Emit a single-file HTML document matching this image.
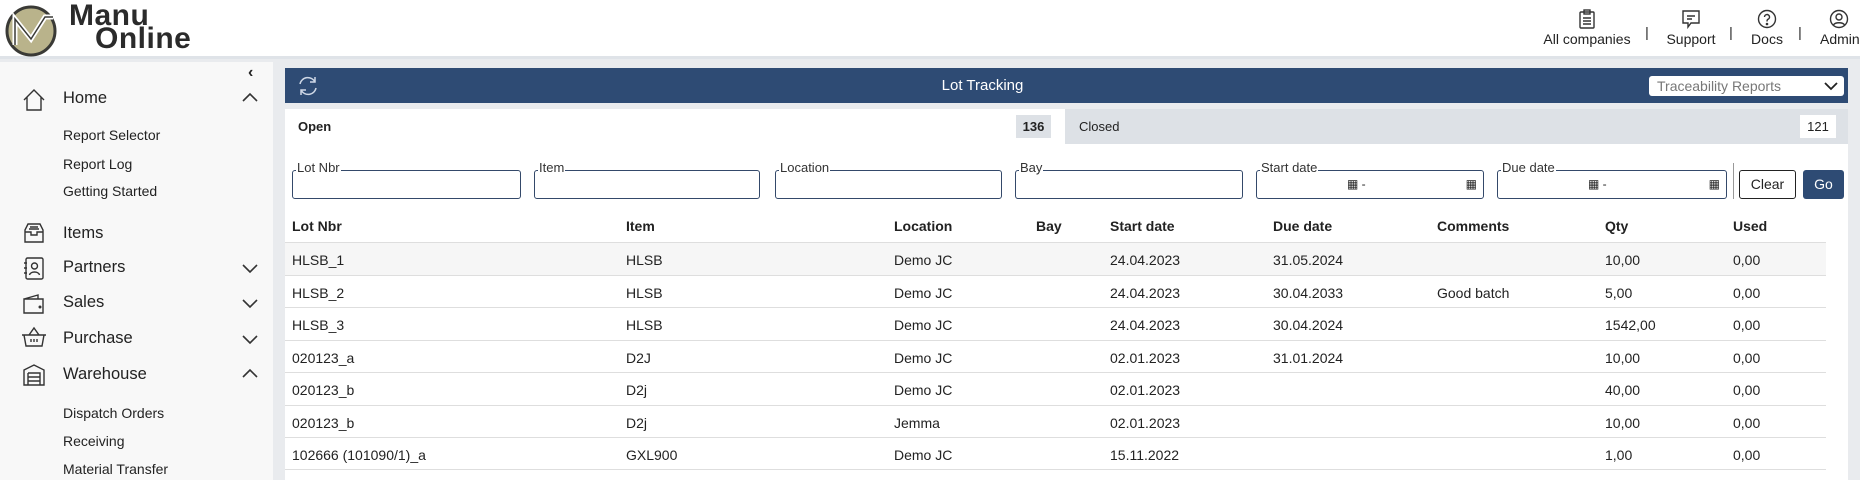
<!DOCTYPE html>
<html><head><meta charset="utf-8"><style>
*{box-sizing:border-box;margin:0;padding:0}
body{width:1860px;height:480px;overflow:hidden;background:#e9ebee;font-family:"Liberation Sans",Arial,sans-serif;color:#222;position:relative}
.abs{position:absolute}
#hdr{left:0;top:0;width:1860px;height:59px;background:#fff;border-bottom:3px solid #dfe3e8}
#side{left:0;top:62px;width:273px;height:418px;background:#f8f8f8}
.nav{position:absolute;left:63px;font-size:16.5px;color:#222}
.sub{position:absolute;left:63px;font-size:14px;color:#222}
.chev{position:absolute;left:242px}
#bar{left:285px;top:68px;width:1563px;height:35px;background:#2e4b74;color:#fff}
#main{left:285px;top:109px;width:1563px;height:371px;background:#fff}
.inp{position:absolute;top:170px;height:29px;border:1px solid #34496a;border-radius:3px;background:#fff}
.lbl{position:absolute;top:-10px;left:3px;background:#fff;font-size:13px;color:#333;padding:0 1px;line-height:14px}
.th{position:absolute;top:218px;font-size:14px;font-weight:bold;color:#222}
.row{position:absolute;left:285px;width:1541px;height:33px;border-top:1px solid #dedede;font-size:14px}
.row span{position:absolute;top:9px}
.hi{font-size:14px;position:absolute;text-align:center}
</style></head><body>
<div id="hdr" class="abs">
 <svg class="abs" style="left:3px;top:3px" width="58" height="54" viewBox="0 0 58 54">
  <circle cx="28" cy="28" r="24" fill="#b9b38b" stroke="#3a3a36" stroke-width="3"/>
  <path d="M12 42 V16 L28 36 L42 14 L50 14" fill="none" stroke="#fff" stroke-width="5"/>
  <path d="M12 42 V16 L28 36 L42 14 L50 14" fill="none" stroke="#3a3a36" stroke-width="1.5"/>
 </svg>
 <div class="abs" style="left:69px;top:1px;font-size:30px;font-weight:bold;color:#2b2b2b;line-height:30px;letter-spacing:0.5px">Manu</div>
 <div class="abs" style="left:95px;top:24px;font-size:30px;font-weight:bold;color:#2b2b2b;line-height:30px;letter-spacing:0.5px">Online</div>
 <svg class="abs" style="left:1578px;top:9px" width="18" height="20" viewBox="0 0 18 20" fill="none" stroke="#333" stroke-width="1.4"><rect x="2" y="3" width="14" height="16" rx="1"/><rect x="6" y="1" width="6" height="4"/><path d="M5 9h8M5 12h8M5 15h8"/></svg>
 <div class="hi" style="left:1537px;top:31px;width:100px">All companies</div>
 <div class="hi" style="left:1642px;top:24px;width:10px">|</div>
 <svg class="abs" style="left:1681px;top:9px" width="20" height="20" viewBox="0 0 20 20" fill="none" stroke="#333" stroke-width="1.4"><path d="M2 2h16v12H10l-3 4v-4H2z"/><path d="M6 7h8M6 10h5"/></svg>
 <div class="hi" style="left:1661px;top:31px;width:60px">Support</div>
 <div class="hi" style="left:1726px;top:24px;width:10px">|</div>
 <svg class="abs" style="left:1757px;top:9px" width="20" height="20" viewBox="0 0 20 20" fill="none" stroke="#333" stroke-width="1.4"><circle cx="10" cy="10" r="8.5"/><path d="M7.5 8a2.5 2.5 0 1 1 3.5 2.3c-1 .5-1 1.2-1 2.2"/><circle cx="10" cy="15" r=".6" fill="#333"/></svg>
 <div class="hi" style="left:1747px;top:31px;width:40px">Docs</div>
 <div class="hi" style="left:1795px;top:24px;width:10px">|</div>
 <svg class="abs" style="left:1829px;top:9px" width="20" height="20" viewBox="0 0 20 20" fill="none" stroke="#333" stroke-width="1.4"><circle cx="10" cy="10" r="8.5"/><circle cx="10" cy="8" r="3"/><path d="M4.5 16c1.5-3 9.5-3 11 0"/></svg>
 <div class="abs" style="left:1820px;top:31px;font-size:14px">Admin</div>
</div>
<div id="side" class="abs">
 <div class="abs" style="left:248px;top:2px;font-size:16px;font-weight:bold">‹</div>
 <svg class="abs" style="left:22px;top:26px" width="24" height="24" viewBox="0 0 24 24" fill="none" stroke="#333" stroke-width="1.4"><path d="M2 12L12 2l10 10M5 9v13h14V9"/></svg>
 <div class="nav" style="top:27px">Home</div>
 <svg class="chev" style="top:30px" width="16" height="12" viewBox="0 0 16 12" fill="none" stroke="#333" stroke-width="1.6"><path d="M1 9l7-7 7 7"/></svg>
 <div class="sub" style="top:65px">Report Selector</div>
 <div class="sub" style="top:94px">Report Log</div>
 <div class="sub" style="top:121px">Getting Started</div>
 <svg class="abs" style="left:22px;top:160px" width="24" height="22" viewBox="0 0 24 22" fill="none" stroke="#333" stroke-width="1.4"><path d="M3 8L6 2h12l3 6v12H3z M3 10h6v3h6v-3h6M8 5h8M7 7h10"/></svg>
 <div class="nav" style="top:162px">Items</div>
 <svg class="abs" style="left:23px;top:195px" width="22" height="24" viewBox="0 0 22 24" fill="none" stroke="#333" stroke-width="1.4"><rect x="3" y="1" width="17" height="21" rx="1.5"/><circle cx="11.5" cy="9" r="3"/><path d="M6.5 18c1-4 9-4 10 0M1 6h3M1 11h3M1 16h3"/></svg>
 <div class="nav" style="top:196px">Partners</div>
 <svg class="chev" style="top:200px" width="16" height="12" viewBox="0 0 16 12" fill="none" stroke="#333" stroke-width="1.6"><path d="M1 3l7 7 7-7"/></svg>
 <svg class="abs" style="left:22px;top:231px" width="24" height="22" viewBox="0 0 24 22" fill="none" stroke="#333" stroke-width="1.4"><path d="M2 6h19v14H2zM2 6l14-4v4"/><circle cx="18" cy="14" r=".8" fill="#333"/></svg>
 <div class="nav" style="top:231px">Sales</div>
 <svg class="chev" style="top:235px" width="16" height="12" viewBox="0 0 16 12" fill="none" stroke="#333" stroke-width="1.6"><path d="M1 3l7 7 7-7"/></svg>
 <svg class="abs" style="left:21px;top:264px" width="26" height="22" viewBox="0 0 26 22" fill="none" stroke="#333" stroke-width="1.4"><path d="M1 9h24M3 9l2 11h16l2-11M8 9l5-7 5 7M10 13v3M13 13v3M16 13v3"/></svg>
 <div class="nav" style="top:267px">Purchase</div>
 <svg class="chev" style="top:271px" width="16" height="12" viewBox="0 0 16 12" fill="none" stroke="#333" stroke-width="1.6"><path d="M1 3l7 7 7-7"/></svg>
 <svg class="abs" style="left:22px;top:301px" width="24" height="24" viewBox="0 0 24 24" fill="none" stroke="#333" stroke-width="1.4"><path d="M2 7l10-5 10 5v15H2zM6 10h12v12M6 10v12M6 14h12M6 18h12"/></svg>
 <div class="nav" style="top:303px">Warehouse</div>
 <svg class="chev" style="top:306px" width="16" height="12" viewBox="0 0 16 12" fill="none" stroke="#333" stroke-width="1.6"><path d="M1 9l7-7 7 7"/></svg>
 <div class="sub" style="top:343px">Dispatch Orders</div>
 <div class="sub" style="top:371px">Receiving</div>
 <div class="sub" style="top:399px">Material Transfer</div>
</div>
<div id="bar" class="abs">
 <svg class="abs" style="left:12px;top:7px" width="22" height="22" viewBox="0 0 22 22" fill="none" stroke="#cfd8e6" stroke-width="1.5"><path d="M3 9a8 8 0 0 1 15-2M19 13a8 8 0 0 1-15 2M18 2v5h-5M4 20v-5h5"/></svg>
 <div class="abs" style="left:0;width:1395px;top:9px;text-align:center;font-size:15px">Lot Tracking</div>
 <div class="abs" style="left:1364px;top:8px;width:195px;height:20px;background:#fff;border-radius:3px;color:#777;font-size:14px;padding:2px 8px">Traceability Reports
  <svg class="abs" style="right:6px;top:6px" width="14" height="9" viewBox="0 0 14 9" fill="none" stroke="#222" stroke-width="1.8"><path d="M1 1l6 6 6-6"/></svg></div>
</div>
<div id="main" class="abs">
 <div class="abs" style="left:780px;top:0;width:783px;height:35px;background:#dde1e6"></div>
 <div class="abs" style="left:13px;top:10px;font-size:13px;font-weight:bold">Open</div>
 <div class="abs" style="left:731px;top:6px;width:35px;height:23px;background:#dde1e6;font-size:13px;font-weight:bold;text-align:center;line-height:23px">136</div>
 <div class="abs" style="left:794px;top:10px;font-size:13px">Closed</div>
 <div class="abs" style="left:1515px;top:6px;width:36px;height:23px;background:#fff;font-size:13px;text-align:center;line-height:23px">121</div>
</div>
<div class="inp" style="left:292px;width:229px"><span class="lbl">Lot Nbr</span></div>
<div class="inp" style="left:534px;width:226px"><span class="lbl">Item</span></div>
<div class="inp" style="left:775px;width:227px"><span class="lbl">Location</span></div>
<div class="inp" style="left:1015px;width:228px"><span class="lbl">Bay</span></div>
<div class="inp" style="left:1256px;width:228px"><span class="lbl">Start date</span><span class="abs" style="left:90px;top:6px;font-size:12px">▦ -</span><span class="abs" style="right:6px;top:6px;font-size:12px">▦</span></div>
<div class="inp" style="left:1497px;width:230px"><span class="lbl">Due date</span><span class="abs" style="left:90px;top:6px;font-size:12px">▦ -</span><span class="abs" style="right:6px;top:6px;font-size:12px">▦</span></div>
<div class="abs" style="left:1733px;top:163px;width:1px;height:36px;background:#999"></div>
<div class="abs" style="left:1739px;top:170px;width:57px;height:29px;border:1px solid #222;border-radius:3px;background:#fff;font-size:14px;text-align:center;line-height:27px">Clear</div>
<div class="abs" style="left:1803px;top:170px;width:41px;height:29px;border-radius:3px;background:#2e4b74;color:#fff;font-size:14px;text-align:center;line-height:29px">Go</div>
<div class="th" style="left:292px">Lot Nbr</div><div class="th" style="left:626px">Item</div><div class="th" style="left:894px">Location</div><div class="th" style="left:1036px">Bay</div><div class="th" style="left:1110px">Start date</div><div class="th" style="left:1273px">Due date</div><div class="th" style="left:1437px">Comments</div><div class="th" style="left:1605px">Qty</div><div class="th" style="left:1733px">Used</div>
<div class="row" style="top:242px;background:#f6f6f6"><span style="left:7px">HLSB_1</span><span style="left:341px">HLSB</span><span style="left:609px">Demo JC</span><span style="left:825px">24.04.2023</span><span style="left:988px">31.05.2024</span><span style="left:1320px">10,00</span><span style="left:1448px">0,00</span></div>
<div class="row" style="top:275px"><span style="left:7px">HLSB_2</span><span style="left:341px">HLSB</span><span style="left:609px">Demo JC</span><span style="left:825px">24.04.2023</span><span style="left:988px">30.04.2033</span><span style="left:1152px">Good batch</span><span style="left:1320px">5,00</span><span style="left:1448px">0,00</span></div>
<div class="row" style="top:307px"><span style="left:7px">HLSB_3</span><span style="left:341px">HLSB</span><span style="left:609px">Demo JC</span><span style="left:825px">24.04.2023</span><span style="left:988px">30.04.2024</span><span style="left:1320px">1542,00</span><span style="left:1448px">0,00</span></div>
<div class="row" style="top:340px"><span style="left:7px">020123_a</span><span style="left:341px">D2J</span><span style="left:609px">Demo JC</span><span style="left:825px">02.01.2023</span><span style="left:988px">31.01.2024</span><span style="left:1320px">10,00</span><span style="left:1448px">0,00</span></div>
<div class="row" style="top:372px"><span style="left:7px">020123_b</span><span style="left:341px">D2j</span><span style="left:609px">Demo JC</span><span style="left:825px">02.01.2023</span><span style="left:1320px">40,00</span><span style="left:1448px">0,00</span></div>
<div class="row" style="top:405px"><span style="left:7px">020123_b</span><span style="left:341px">D2j</span><span style="left:609px">Jemma</span><span style="left:825px">02.01.2023</span><span style="left:1320px">10,00</span><span style="left:1448px">0,00</span></div>
<div class="row" style="top:437px;border-bottom:1px solid #dedede"><span style="left:7px">102666 (101090/1)_a</span><span style="left:341px">GXL900</span><span style="left:609px">Demo JC</span><span style="left:825px">15.11.2022</span><span style="left:1320px">1,00</span><span style="left:1448px">0,00</span></div>
</body></html>
